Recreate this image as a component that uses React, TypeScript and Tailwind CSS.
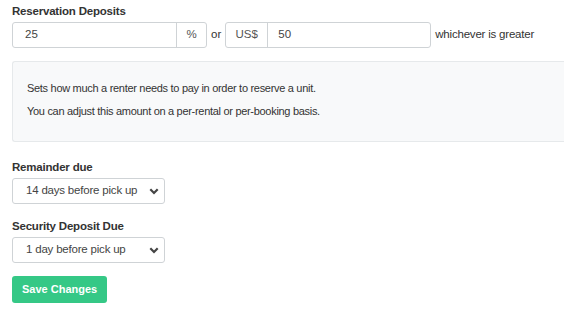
function Chevron() {
  return (
    <svg width="10" height="7" viewBox="0 0 10 7" className="absolute right-[5px] top-[9px]">
      <path d="M1.3 1.3 L5 5 L8.7 1.3" fill="none" stroke="#444" strokeWidth="2.2" />
    </svg>
  );
}

function Select({ value }: { value: string }) {
  return (
    <div className="relative flex h-[26px] w-[153px] items-center rounded-[3px] border border-[#cfd3d6] bg-white pl-[13px] text-[11.5px] text-[#444]">
      <span className="tracking-[-0.2px]">{value}</span>
      <Chevron />
    </div>
  );
}

export default function App() {
  return (
    <div className="h-[323px] w-[564px] overflow-hidden bg-white pl-3 pt-[3px] text-[11px] text-[#333]" style={{ fontFamily: '"Liberation Sans", Arial, sans-serif' }}>
      <div className="h-4 text-[11.5px] font-bold leading-4 tracking-[-0.2px]">Reservation Deposits</div>

      {/* deposit inputs */}
      <div className="mt-[3px] flex h-[26px] items-center">
        <div className="flex h-full w-[195px] rounded-[3px] border border-[#cfd3d6]">
          <div className="flex flex-1 items-center pl-[12px] text-[11.5px] text-[#444]">25</div>
          <div className="flex w-[30px] items-center justify-center border-l border-[#cfd3d6] text-[11.5px] text-[#555]">%</div>
        </div>
        <span className="ml-[4px] mr-[4px] text-[11.5px]">or</span>
        <div className="flex h-full w-[206px] rounded-[3px] border border-[#cfd3d6]">
          <div className="flex w-[42px] items-center justify-center border-r border-[#cfd3d6] text-[11.5px] text-[#555]">US$</div>
          <div className="flex flex-1 items-center pl-[10px] text-[11.5px] text-[#444]">50</div>
        </div>
        <span className="ml-[4px] text-[11.5px] tracking-[-0.2px]">whichever is greater</span>
      </div>

      {/* info box */}
      <div className="mt-[13px] h-[81px] w-[560px] rounded-l-[3px] border border-r-0 border-[#e6e9eb] bg-[#f8f9fa] pl-[14px] pt-[19px] text-[11px] leading-[14px] tracking-[-0.3px] text-[#333]">
        <p>Sets how much a renter needs to pay in order to reserve a unit.</p>
        <p className="mt-[9px]">You can adjust this amount on a per-rental or per-booking basis.</p>
      </div>

      <div className="mt-[17px] h-4 text-[11.5px] font-bold leading-4 tracking-[-0.2px]">Remainder due</div>
      <div className="mt-[3px]">
        <Select value="14 days before pick up" />
      </div>

      <div className="mt-[14px] h-4 text-[11.5px] font-bold leading-4 tracking-[-0.2px]">Security Deposit Due</div>
      <div className="mt-[3px]">
        <Select value="1 day before pick up" />
      </div>

      <button className="mt-[13px] flex h-[27px] items-center rounded-[3px] bg-[#35c886] px-[10px] text-[11px] font-bold text-white">
        Save Changes
      </button>
    </div>
  );
}
